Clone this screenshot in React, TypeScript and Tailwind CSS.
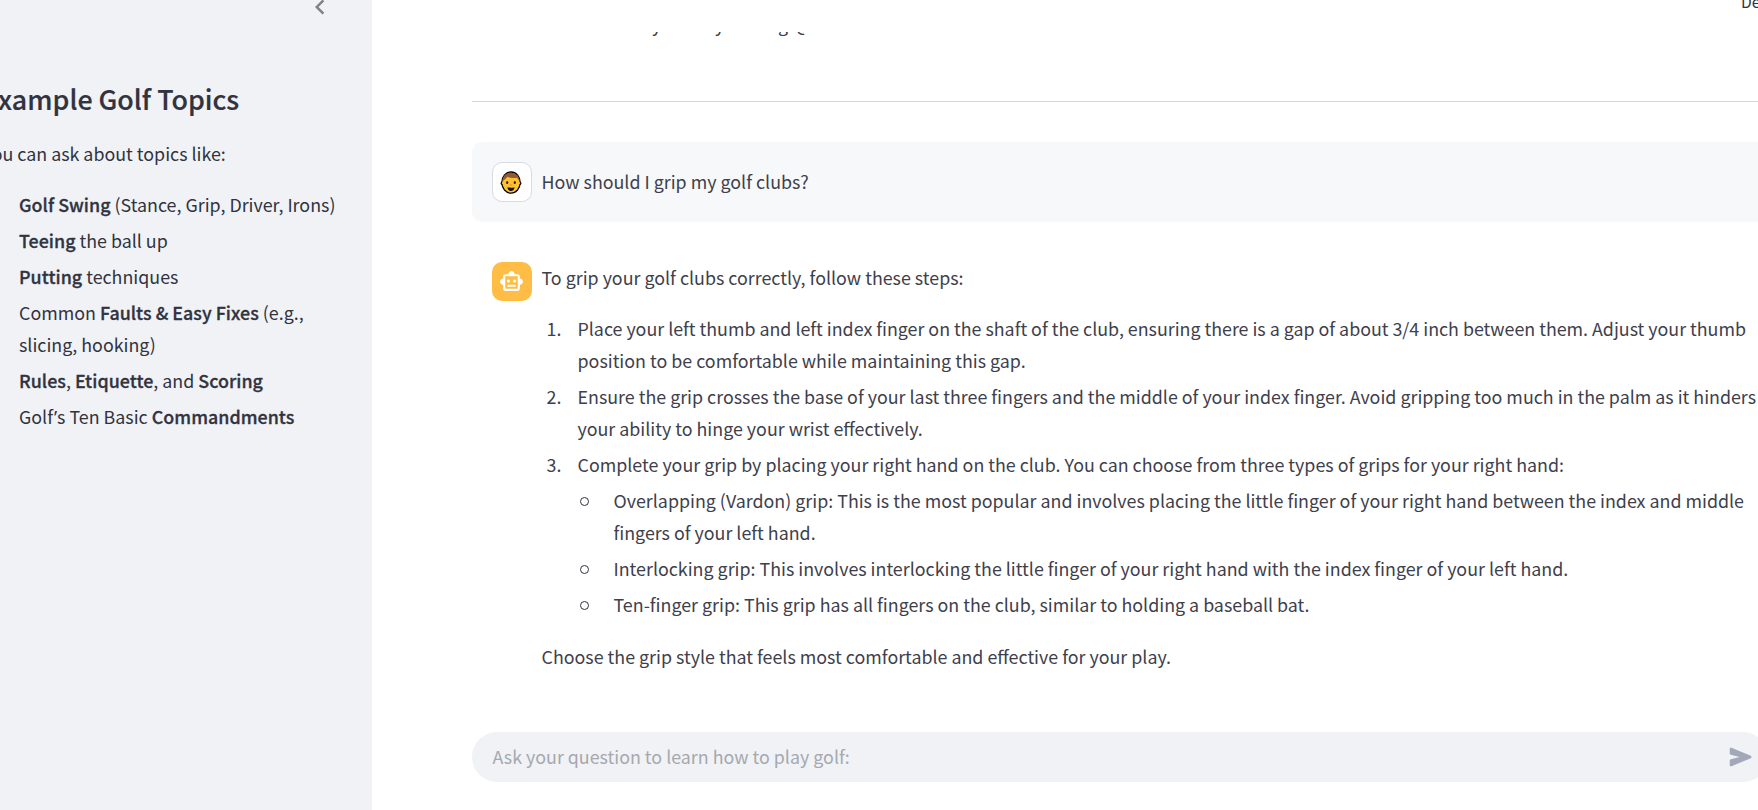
import type { ReactNode } from "react";

function ChevronLeft() {
  return (
    <svg viewBox="0 0 24 24" className="h-[30px] w-[30px] shrink-0 fill-[#808289]">
      <path d="M15.41 7.41 14 6l-6 6 6 6 1.41-1.41L10.83 12z" />
    </svg>
  );
}

function RobotIcon() {
  return (
    <svg viewBox="0 0 24 24" className="mr-[2px] h-[25px] w-[25px] fill-white">
      <path d="M20 9V7c0-1.1-.9-2-2-2h-3c0-1.66-1.34-3-3-3S9 3.34 9 5H6c-1.1 0-2 .9-2 2v2c-1.66 0-3 1.34-3 3s1.34 3 3 3v4c0 1.1.9 2 2 2h12c1.1 0 2-.9 2-2v-4c1.66 0 3-1.34 3-3s-1.34-3-3-3zm-2 10H6V7h12v12zm-9-6c-.83 0-1.5-.67-1.5-1.5S8.17 10 9 10s1.5.67 1.5 1.5S9.83 13 9 13zm7.5-1.5c0 .83-.67 1.5-1.5 1.5s-1.5-.67-1.5-1.5.67-1.5 1.5-1.5 1.5.67 1.5 1.5zM8 15h8v2H8v-2z" />
    </svg>
  );
}

function ManFace() {
  return (
    <svg viewBox="0 0 22 23" className="mr-[2px] h-[23px] w-[22px]">
      <ellipse cx="11" cy="11.5" rx="9.8" ry="11.2" fill="#000" />
      <ellipse cx="11" cy="12.3" rx="10.6" ry="3.6" fill="#000" />
      <ellipse cx="11" cy="11.6" rx="8.6" ry="9.9" fill="#ffc22e" />
      <ellipse cx="11" cy="12.3" rx="9.4" ry="2.2" fill="#ffc22e" />
      <path d="M2.5 10C2.8 5 6.2 1.7 11 1.7s8.2 3.3 8.500 8.300C18.300 9.300 17.800 8 17.200 6.800 13 7.300 9.500 6.800 7.600 5.800 6.400 7 4.500 9.200 2.500 10z" fill="#935a32" />
      <ellipse cx="7.2" cy="11.4" rx="1.1" ry="1.5" fill="#2a2320" />
      <ellipse cx="14.8" cy="11.4" rx="1.1" ry="1.5" fill="#2a2320" />
      <ellipse cx="11" cy="14" rx="1.7" ry=".8" fill="#f98b50" />
      <path d="M7.5 16.2c2.2.7 4.8.7 7 0-.2 2.6-1.5 3.8-3.5 3.8s-3.300-1.200-3.500-3.800z" fill="#1d1410" />
    </svg>
  );
}

function SendIcon() {
  return (
    <svg viewBox="0 0 24 24" className="-mt-px h-[30px] w-[30px] shrink-0 fill-[#a3a8b8]">
      <path d="M3 5.51v3.71c0 .46.31.86.76.97L11 12l-7.24 1.81c-.45.12-.76.52-.76.97v3.71c0 .72.73 1.2 1.39.92l15.42-6.49c.82-.34.82-1.5 0-1.84L4.39 4.58C3.73 4.31 3 4.79 3 5.51z" />
    </svg>
  );
}

function Strong({ children }: { children: ReactNode }) {
  return <strong className="font-medium tracking-[0.03px] [-webkit-text-stroke:0.3px_#31333f]">{children}</strong>;
}

function Step({ n, children }: { n: number; children: ReactNode }) {
  return (
    <li className="flex">
      <span className="w-9 shrink-0 pl-[5px]">{n}.</span>
      <div>{children}</div>
    </li>
  );
}

function SubStep({ children }: { children: ReactNode }) {
  return (
    <li className="flex">
      <span className="-mb-[2px] flex h-[34px] w-9 shrink-0 items-center pl-[2.5px]">
        <span className="h-[9px] w-[9px] rounded-full border border-[#31333f]" />
      </span>
      <div>{children}</div>
    </li>
  );
}

function Sidebar() {
  return (
    <aside className="flex w-[372px] shrink-0 flex-col overflow-hidden bg-[#f0f2f6]">
      <div className="-mt-2 flex h-[30px] shrink-0 justify-end pr-[37px]">
        <ChevronLeft />
      </div>
      <div className="-ml-[17px] mt-[59px] whitespace-nowrap">
        <h2 className="text-[26.8px] font-medium leading-9 [-webkit-text-stroke:0.2px_#31333f]">Example Golf Topics</h2>
        <p className="mt-5">You can ask about topics like:</p>
        <ul className="ml-9 mt-[19px] flex flex-col gap-1">
          <li><Strong>Golf Swing</Strong> (Stance, Grip, Driver, Irons)</li>
          <li><Strong>Teeing</Strong> the ball up</li>
          <li><Strong>Putting</Strong> techniques</li>
          <li>Common <Strong>Faults &amp; Easy Fixes</Strong> (e.g.,<br />slicing, hooking)</li>
          <li><Strong>Rules</Strong>, <Strong>Etiquette</Strong>, and <Strong>Scoring</Strong></li>
          <li>Golf<span className="pl-px font-['Noto_Sans',sans-serif] leading-none">’</span>s Ten Basic <Strong>Commandments</Strong></li>
        </ul>
      </div>
    </aside>
  );
}

export default function App() {
  return (
    <div className="flex h-[810px] w-full overflow-hidden bg-white font-['Noto_Sans_CJK_SC','Noto_Sans',sans-serif] text-[17.85px] leading-8 text-[#31333f]">
      <Sidebar />
      <main className="flex min-w-0 flex-1 flex-col overflow-hidden whitespace-nowrap">
        <header className="flex h-8 shrink-0 items-start justify-end overflow-hidden">
          <span className="-mt-[13px] w-[17px] text-[15.6px] leading-7">Deploy</span>
        </header>
        <div className="ml-[100px] flex h-[700px] w-[1296px] shrink-0 flex-col overflow-hidden text-[#3e404b]">
          <p className="-mt-6 origin-left rotate-[0.01deg] pl-[17px] tracking-[-0.1px]">stead we see the way best by Making Questions.</p>
          <hr className="mt-[61px] border-[#d5d6d9]" />
          <section className="mt-10 flex h-20 shrink-0 items-center gap-[9.5px] rounded-[10px] bg-[#f7f8fa] px-5">
            <div className="flex h-10 w-10 items-center justify-center rounded-[10px] border border-[#d5dae5] bg-white">
              <ManFace />
            </div>
            <p className="mb-[2px]">How should I grip my golf clubs?</p>
          </section>
          <section className="mt-10 flex gap-[9.5px] px-5">
            <div className="flex h-[39px] w-10 shrink-0 items-center justify-center rounded-[10px] bg-[#ffbd45]">
              <RobotIcon />
            </div>
            <div className="-mt-px">
              <p>To grip your golf clubs correctly, follow these steps:</p>
              <ol className="mt-[19px] flex flex-col gap-1">
                <Step n={1}>
                  <span className="tracking-[-0.01px]">Place your left thumb and left index finger on the shaft of the club, ensuring there is a gap of about 3/4 inch between them. Adjust your thumb</span>
                  <br />position to be comfortable while maintaining this gap.
                </Step>
                <Step n={2}>
                  Ensure the grip crosses the base of your last three fingers and the middle of your index finger. Avoid gripping too much in the palm as it hinders
                  <br />your ability to hinge your wrist effectively.
                </Step>
                <Step n={3}>
                  Complete your grip by placing your right hand on the club. You can choose from three types of grips for your right hand:
                  <ul className="mt-1 flex flex-col gap-1">
                    <SubStep>
                      Overlapping (Vardon) grip: This is the most popular and involves placing the little finger of your right hand between the index and middle
                      <br />fingers of your left hand.
                    </SubStep>
                    <SubStep>Interlocking grip: This involves interlocking the little finger of your right hand with the index finger of your left hand.</SubStep>
                    <SubStep>Ten-finger grip: This grip has all fingers on the club, similar to holding a baseball bat.</SubStep>
                  </ul>
                </Step>
              </ol>
              <p className="mt-5">Choose the grip style that feels most comfortable and effective for your play.</p>
            </div>
          </section>
        </div>
        <div className="ml-[100px] flex h-[50px] w-[1296px] shrink-0 items-center justify-between rounded-full bg-[#f0f2f6] pl-[20.5px] pr-3">
          <span className="mb-[3px] text-[#a6a8ae]">Ask your question to learn how to play golf:</span>
          <SendIcon />
        </div>
      </main>
    </div>
  );
}
